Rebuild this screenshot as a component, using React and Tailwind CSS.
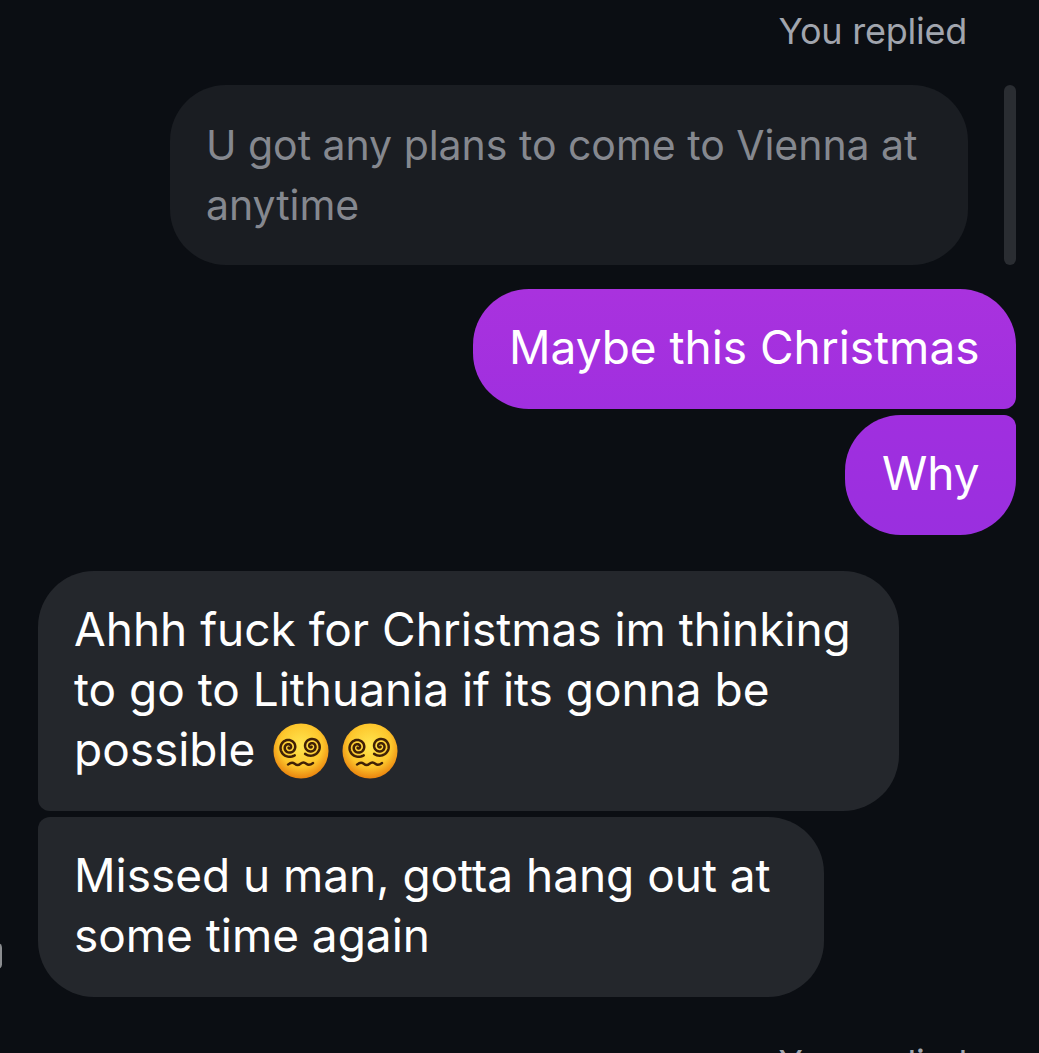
const Spiral = ({ cx, cy, flip }) => {
  const pts = [];
  for (let i = 0; i <= 90; i++) {
    const t = (i / 90) * Math.PI * 4.4;
    const r = 0.6 + (i / 90) * 9.6;
    const a = flip ? t + 1 : -t + 2.2;
    pts.push(`${(cx + r * Math.cos(a)).toFixed(2)},${(cy + r * Math.sin(a)).toFixed(2)}`);
  }
  return <polyline points={pts.join(" ")} fill="none" stroke="#3f2006" strokeWidth="2.6" strokeLinecap="round" />;
};

const DizzyEmoji = ({ id, className }) => (
  <svg width="56" height="56" viewBox="0 0 58 58" className={className}>
    <defs>
      <radialGradient id={id} cx="50%" cy="40%" r="60%">
        <stop offset="0%" stopColor="#ffe650" />
        <stop offset="65%" stopColor="#fdc62c" />
        <stop offset="100%" stopColor="#e9830e" />
      </radialGradient>
    </defs>
    <circle cx="29" cy="29" r="28.500" fill={`url(#${id})`} />
    <Spiral cx={16.5} cy={25.2} />
    <Spiral cx={39.7} cy={24.1} flip />
    <path d="M15.500 43c3-2.500 5-2.500 7-.8s4 1.700 6 0 4-1.700 6 0 4 1.500 7-.8" fill="none" stroke="#3f2006" strokeWidth="2.400" strokeLinecap="round" />
  </svg>
);

export default function App() {
  return (
    <div className="relative h-[1053px] w-[1039px] overflow-hidden whitespace-nowrap bg-[#0b0e13] font-['Inter','Liberation_Sans',sans-serif] text-[46px] leading-[60px] tracking-[-0.03px] text-white">
      <div className="flex flex-col pl-[38px] pr-[23px] pt-[8px]">
        <div className="mr-[49px] h-[77px] self-end text-right text-[36px] leading-[46px] tracking-[-0.25px] text-[#a1a5ae]">You replied</div>

        <div className="mr-[48px] w-[798px] self-end rounded-[56px] bg-[#1a1d22] py-[30px] pl-[36px] pr-[37px] text-[41px] tracking-[-0.03px] text-[#85888f]">
          U got any plans to come to Vienna at<br />anytime
        </div>

        <div className="mt-[24px] flex flex-col items-end gap-[6px]">
          <div className="w-[543px] rounded-[56px] rounded-br-[12px] bg-gradient-to-b from-[#a932de] to-[#a02fdf] pb-[32px] pl-[36px] pr-[36px] pt-[28px]">Maybe this Christmas</div>
          <div className="w-[171px] rounded-[56px] rounded-tr-[12px] bg-gradient-to-b from-[#a02fdf] to-[#9a2fdf] pb-[32px] pl-[37px] pr-[30px] pt-[28px]">Why</div>
        </div>

        <div className="mt-[36px] flex flex-col items-start gap-[6px]">
          <div className="w-[861px] rounded-[56px] rounded-bl-[12px] bg-[#24272c] pb-[32px] pl-[36px] pr-[36px] pt-[28px]">
            Ahhh fuck for Christmas im thinking<br />
            to go to Lithuania if its gonna be<br />
            possible <DizzyEmoji id="d1" className="-my-[10px] ml-[5px] inline-block align-[-3px]" /> <DizzyEmoji id="d2" className="-my-[10px] inline-block align-[-3px]" />
          </div>
          <div className="w-[786px] rounded-[56px] rounded-tl-[12px] bg-[#24272c] pb-[32px] pl-[36px] pr-[36px] pt-[28px]">
            Missed u man, gotta hang out at<br />some time again
          </div>
        </div>
      </div>

      <div className="absolute left-[1004px] top-[85px] h-[180px] w-[12px] rounded-full bg-[#2a2d32]" />
      <div className="absolute left-[-7px] top-[943px] h-[26px] w-[9px] rounded-full bg-[#8b8d90]" />
      <div className="absolute right-[72px] top-[1040px] text-[36px] leading-[46px] tracking-[-0.25px] text-[#a1a5ae]">You replied</div>
    </div>
  );
}
